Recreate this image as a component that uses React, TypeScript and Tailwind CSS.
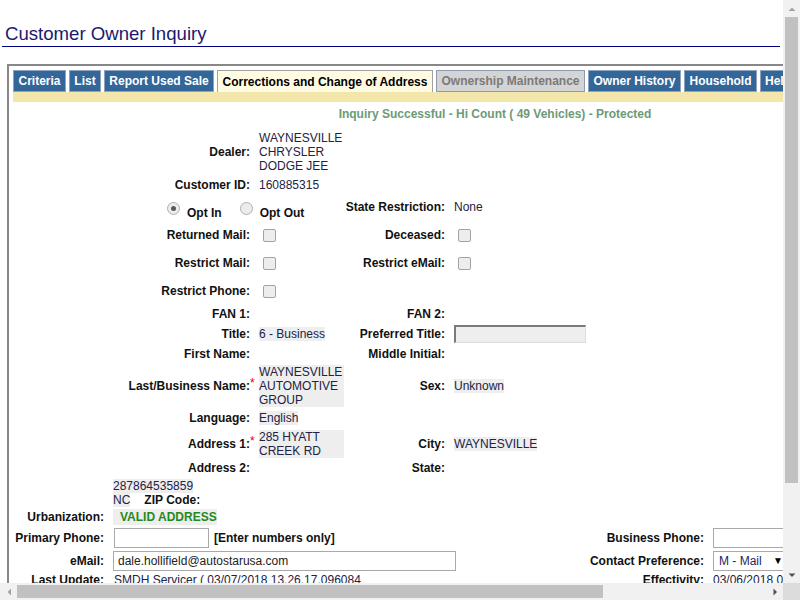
import React from "react";

type RowProps = {
    l1?: React.ReactNode;
    v1?: React.ReactNode;
    l2?: React.ReactNode;
    v2?: React.ReactNode;
    req1?: boolean;
    className: string;
};

function Label({ children, req }: { children?: React.ReactNode; req?: boolean }) {
    return (
        <span className="relative font-bold text-[#111]">
            {children}
            {req && (
                <span className="absolute left-full top-[-3px] font-normal text-[#e00000]">*</span>
            )}
        </span>
    );
}

function Row({ l1, v1, l2, v2, req1, className }: RowProps) {
    return (
        <div className={`flex items-center leading-[14px] ${className}`}>
            <div className="w-[237px] text-right">
                <Label req={req1}>{l1}</Label>
            </div>
            <div className="ml-[9px] w-[85px] text-[#222244]">{v1}</div>
            <div className="w-[101px] text-right">
                <Label>{l2}</Label>
            </div>
            <div className="ml-[9px] text-[#222244]">{v2}</div>
        </div>
    );
}

function Check() {
    return (
        <span className="ml-[4px] block h-[13px] w-[13px] rounded-[2px] border border-[#a3a3a3] bg-[#ededed]" />
    );
}

function Radio({ on }: { on?: boolean }) {
    return (
        <span className="mt-[6px] flex h-[13px] w-[13px] items-center justify-center rounded-full border border-[#b0b0b0] bg-[#ececec]">
            {on && <span className="h-[5px] w-[5px] rounded-full bg-[#5a5a5a]" />}
        </span>
    );
}

function Grey({ children }: { children: React.ReactNode }) {
    return <span className="inline-block bg-[#eeeeee]">{children}</span>;
}

function GreyBlock({ children }: { children: React.ReactNode }) {
    return <div className="w-[85px] bg-[#eeeeee]">{children}</div>;
}

const tabs = [
    { label: "Criteria", cls: "w-[53px] bg-[#336699] border-[#8ea3bf] text-white" },
    { label: "List", cls: "w-[32px] bg-[#336699] border-[#8ea3bf] text-white" },
    { label: "Report Used Sale", cls: "w-[110px] bg-[#336699] border-[#8ea3bf] text-white" },
    { label: "Corrections and Change of Address", cls: "w-[216px] bg-[#fffbe3] border-[#a0a0a0] border-b-0 text-black" },
    { label: "Ownership Maintenance", cls: "w-[149px] bg-[#d4d4d4] border-[#8b9bb1] text-[#7a7a7a]" },
    { label: "Owner History", cls: "w-[93px] bg-[#336699] border-[#8ea3bf] text-white" },
    { label: "Household", cls: "w-[73px] bg-[#336699] border-[#8ea3bf] text-white" },
    { label: "Help", cls: "w-[36px] bg-[#336699] border-[#8ea3bf] text-white" },
];

function Page() {
    return (
        <div className="w-[1000px]">
            <div className="pl-[5px] pt-[23px] text-[18.6px] leading-[22px] text-[#1a1a6e]">
                Customer Owner Inquiry
            </div>
            <div className="mx-[2px] mt-px h-px w-[778px] bg-[#000080]" />

            <div className="ml-[7px] mt-[17px] w-[976px] border-2 border-b-0 border-[#888888] px-[4px] pt-[4px] pb-[20px]">
                <div className="flex h-[22px] gap-[3px]">
                    {tabs.map((t) => (
                        <div
                            key={t.label}
                            className={`flex h-[22px] shrink-0 items-center justify-center whitespace-nowrap border font-bold leading-[14px] ${t.cls}`}
                        >
                            {t.label}
                        </div>
                    ))}
                </div>
                <div className="h-[10px] bg-[#f3e6ab]" />

                <div className="mt-px h-[22px] text-center font-bold leading-[22px] text-[#6c9a78]">
                    Inquiry Successful - Hi Count ( 49 Vehicles) - Protected
                </div>

                <Row
                    className="mt-[6px] h-[42px]"
                    l1="Dealer:"
                    v1={
                        <>
                            WAYNESVILLE
                            <br />
                            CHRYSLER
                            <br />
                            DODGE JEE
                        </>
                    }
                />
                <Row className="mt-[5px] h-[14px]" l1="Customer ID:" v1="160885315" />

                <div className="mt-[4px] flex h-[24px] leading-[14px]">
                    <div className="flex w-[331px] pl-[154px] font-bold text-[#111]">
                        <Radio on />
                        <span className="ml-[7px] mt-[10px]">Opt In</span>
                        <span className="ml-[18px]">
                            <Radio />
                        </span>
                        <span className="ml-[7px] mt-[10px]">Opt Out</span>
                    </div>
                    <div className="mt-[4px] w-[101px] text-right">
                        <Label>State Restriction:</Label>
                    </div>
                    <div className="ml-[9px] mt-[4px] text-[#222244]">None</div>
                </div>

                <Row className="mt-[6px] h-[18px]" l1="Returned Mail:" v1={<Check />} l2="Deceased:" v2={<Check />} />
                <Row className="mt-[10px] h-[18px]" l1="Restrict Mail:" v1={<Check />} l2="Restrict eMail:" v2={<Check />} />
                <Row className="mt-[10px] h-[18px]" l1="Restrict Phone:" v1={<Check />} />
                <Row className="mt-[6px] h-[16px]" l1="FAN 1:" l2="FAN 2:" />
                <Row
                    className="mt-[3px] h-[18px]"
                    l1="Title:"
                    v1={<Grey>6 - Business</Grey>}
                    l2="Preferred Title:"
                    v2={
                        <div className="h-[18px] w-[132px] border border-t-2 border-l-2 border-[#dcdcdc] border-t-[#7a7a7a] border-l-[#7a7a7a] bg-[#eeeeee]" />
                    }
                />
                <Row className="mt-[4px] h-[14px]" l1="First Name:" l2="Middle Initial:" />
                <Row
                    className="mt-[4px] h-[42px]"
                    l1="Last/Business Name:"
                    req1
                    v1={
                        <GreyBlock>
                            WAYNESVILLE
                            <br />
                            AUTOMOTIVE
                            <br />
                            GROUP
                        </GreyBlock>
                    }
                    l2="Sex:"
                    v2={<Grey>Unknown</Grey>}
                />
                <Row className="mt-[4px] h-[14px]" l1="Language:" v1={<Grey>English</Grey>} />
                <Row
                    className="mt-[5px] h-[28px]"
                    l1="Address 1:"
                    req1
                    v1={
                        <GreyBlock>
                            285 HYATT
                            <br />
                            CREEK RD
                        </GreyBlock>
                    }
                    l2="City:"
                    v2={<Grey>WAYNESVILLE</Grey>}
                />
                <Row className="mt-[3px] h-[14px]" l1="Address 2:" l2="State:" />

                <div className="mt-[4px] pl-[100px] leading-[14px] text-[#222244]">
                    <div className="h-[14px]">
                        <Grey>287864535859</Grey>
                    </div>
                    <div className="flex h-[14px]">
                        <Grey>NC</Grey>
                        <span className="ml-[14px] font-bold text-[#111]">ZIP Code:</span>
                    </div>
                </div>

                <div className="mt-[2px] flex h-[16px] items-center leading-[14px]">
                    <div className="w-[91px] text-right">
                        <Label>Urbanization:</Label>
                    </div>
                    <div className="ml-[9px] flex h-[16px] w-[104px] items-center whitespace-nowrap bg-[#eeeeee] pl-[7px] font-bold text-[#1f8a1f]">
                        VALID ADDRESS
                    </div>
                </div>

                <div className="mt-[2px] flex h-[22px] items-center leading-[14px]">
                    <div className="flex w-[500px] items-center">
                        <div className="w-[91px] text-right">
                            <Label>Primary Phone:</Label>
                        </div>
                        <div className="ml-[10px] h-[20px] w-[95px] border border-[#a9a9a9] bg-white" />
                        <span className="ml-[5px] font-bold text-[#111]">[Enter numbers only]</span>
                    </div>
                    <div className="w-[191px] text-right">
                        <Label>Business Phone:</Label>
                    </div>
                    <div className="ml-[9px] h-[20px] w-[95px] border border-[#a9a9a9] bg-white" />
                </div>

                <div className="mt-px flex h-[22px] items-center leading-[14px]">
                    <div className="flex w-[500px] items-center">
                        <div className="w-[91px] text-right">
                            <Label>eMail:</Label>
                        </div>
                        <div className="ml-[9px] flex h-[20px] w-[343px] items-center border border-[#a9a9a9] bg-white pl-[4px] text-[#222]">
                            dale.hollifield@autostarusa.com
                        </div>
                    </div>
                    <div className="w-[191px] text-right">
                        <Label>Contact Preference:</Label>
                    </div>
                    <div className="ml-[9px] flex h-[20px] w-[78px] items-center justify-between border border-[#a9a9a9] bg-white pl-[5px] pr-[7px] text-[#1f1f5f]">
                        <span>M - Mail</span>
                        <span className="text-[10px] text-black">▼</span>
                    </div>
                </div>

                <div className="mt-px flex h-[14px] items-center leading-[14px]">
                    <div className="flex w-[500px] items-center">
                        <div className="w-[91px] text-right">
                            <Label>Last Update:</Label>
                        </div>
                        <span className="ml-[10px] text-[#222244]">SMDH Servicer ( 03/07/2018 13.26.17.096084</span>
                    </div>
                    <div className="w-[191px] text-right">
                        <Label>Effectivity:</Label>
                    </div>
                    <span className="ml-[9px] text-[#222244]">03/06/2018 01.00.00</span>
                </div>
            </div>
        </div>
    );
}

function Arrow({ dir, color }: { dir: "up" | "down" | "left" | "right"; color: string }) {
    const pts = {
        up: "0.5,5 4,1.5 7.5,5",
        down: "0.5,1.5 4,5 7.5,1.5",
        left: "5,0.5 1.5,4 5,7.5",
        right: "1.5,0.5 5,4 1.5,7.5",
    }[dir];
    const vertical = dir === "up" || dir === "down";
    return (
        <svg width={vertical ? 8 : 6} height={vertical ? 6 : 8} viewBox={vertical ? "0 0 8 6" : "0 0 6 8"}>
            <polygon points={pts} fill={color} />
        </svg>
    );
}

export default function App() {
    return (
        <div className="flex h-[600px] w-[800px] flex-col overflow-hidden bg-white font-['Liberation_Sans',Arial,sans-serif] text-[12px]">
            <div className="flex min-h-0 flex-1">
                <div className="min-w-0 flex-1 overflow-hidden">
                    <Page />
                </div>
                <div className="flex w-[17px] flex-col bg-[#f1f1f1]">
                    <div className="flex h-[17px] items-center justify-center">
                        <Arrow dir="up" color="#a3a3a3" />
                    </div>
                    <div className="mx-[2px] h-[466px] bg-[#c1c1c1]" />
                    <div className="flex-1" />
                    <div className="flex h-[17px] items-center justify-center">
                        <Arrow dir="down" color="#505050" />
                    </div>
                </div>
            </div>
            <div className="flex h-[17px]">
                <div className="flex flex-1 bg-[#f1f1f1]">
                    <div className="flex w-[17px] items-center justify-center">
                        <Arrow dir="left" color="#a3a3a3" />
                    </div>
                    <div className="my-[2px] w-[586px] bg-[#c1c1c1]" />
                    <div className="flex-1" />
                    <div className="flex w-[17px] items-center justify-center">
                        <Arrow dir="right" color="#505050" />
                    </div>
                </div>
                <div className="w-[17px] bg-[#dcdcdc]" />
            </div>
        </div>
    );
}
